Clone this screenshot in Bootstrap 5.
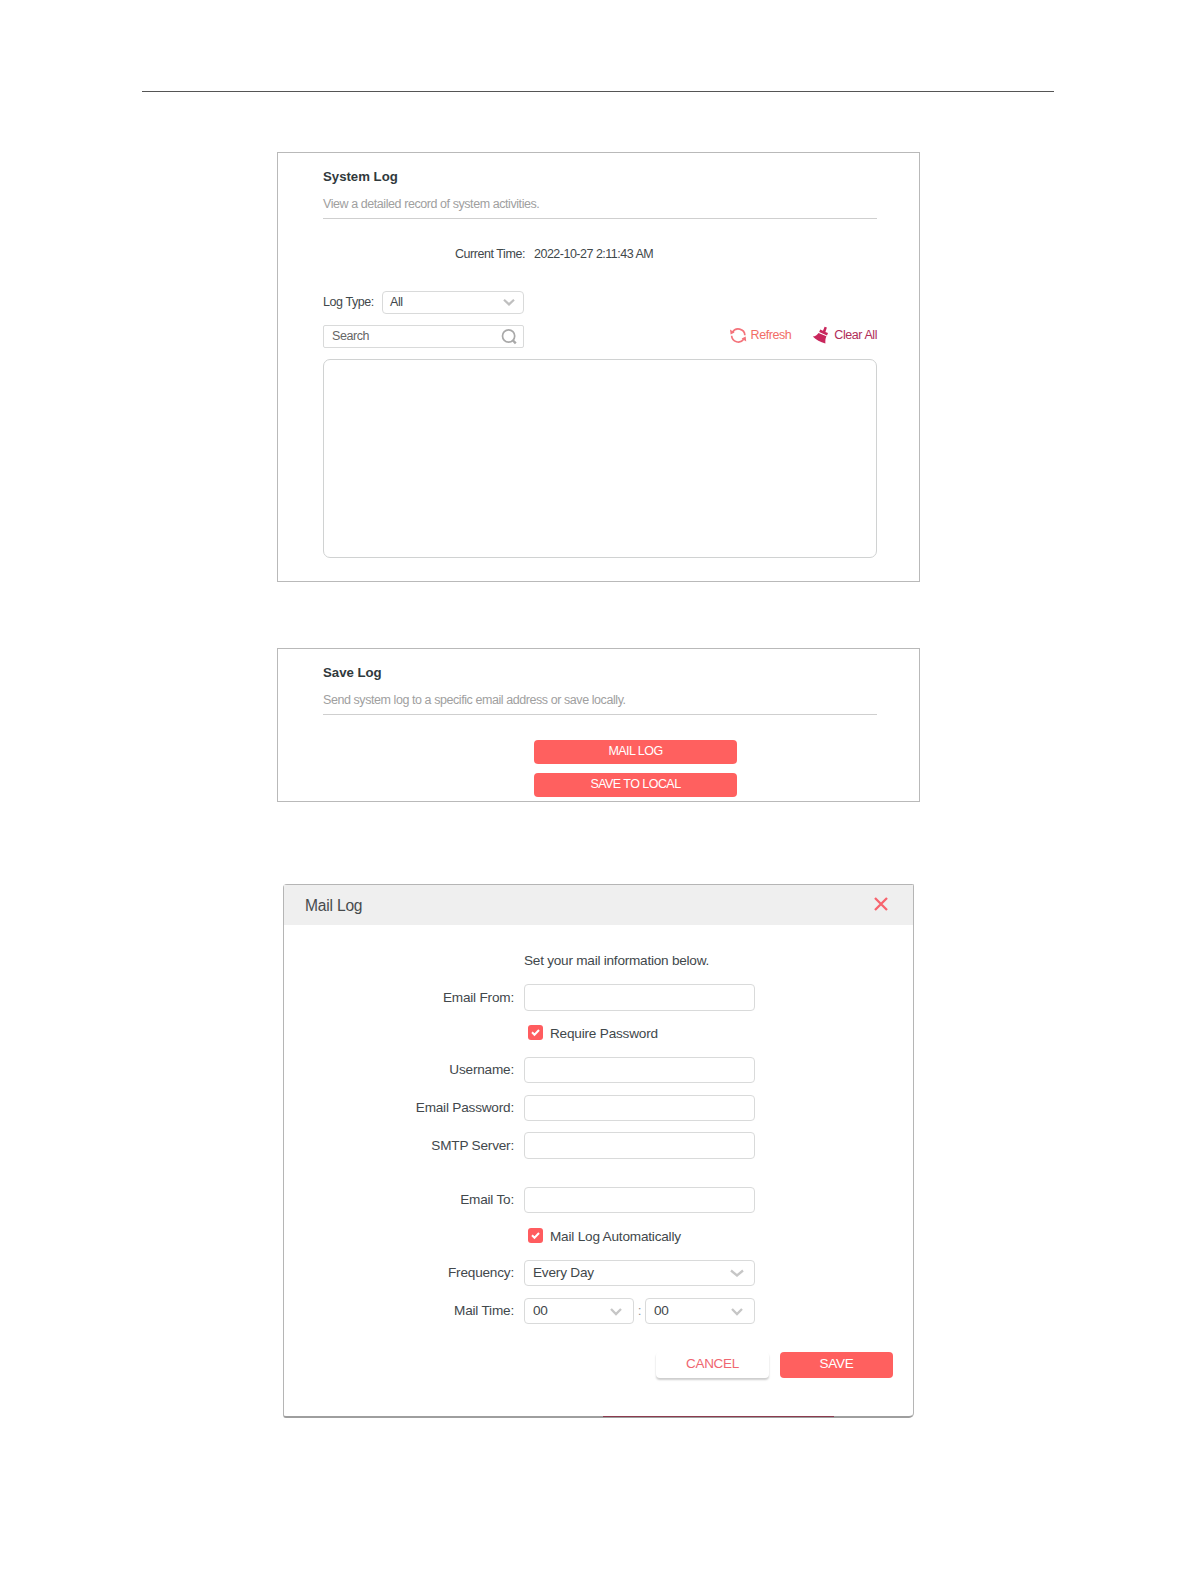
<!DOCTYPE html>
<html lang="en">
<head>
<meta charset="utf-8">
<title>System Log</title>
<link rel="stylesheet" href="https://cdn.jsdelivr.net/npm/bootstrap@5.3.0/dist/css/bootstrap.min.css">
<style>
body{font-family:"Liberation Sans",Arial,sans-serif;font-size:12.5px;letter-spacing:-.43px;line-height:16px;color:#3f484b;background:#fff}
.sheet{width:1196px;height:1582px;padding-top:91px}
.top-rule{width:912px;height:1px;margin-left:142px;background:#555}
.panel{width:643px;margin-left:277px;border:1px solid #b9b9b9;padding:0 42px 0 45px}
.panel-log{height:430px;margin-top:60px;padding-top:16px}
.panel-save{height:154px;margin-top:66px;padding-top:16px}
.panel-title{font-size:13.2px;font-weight:700;letter-spacing:0;line-height:16px;margin:0 0 11px;color:#30393c}
.panel-sub{color:#a0a0a0;border-bottom:1px solid #cfcfcf;height:23px;margin:0}
.now{margin-top:27px}
.now-label{width:202px;margin-right:9px;text-align:right}
.now-value{letter-spacing:-.5px}
.type-row{margin-top:29px;height:23px}
.type-label{width:59px;padding-bottom:2px}
.field{border:1px solid #d9dada;border-radius:4px;background:#fff}
.field.form-control{box-shadow:none;min-height:0;padding:0 9px;color:inherit;font:inherit;letter-spacing:inherit}
.field-type{width:142px;height:23px;padding:0 8px 1px 7px}
.tool-row{margin-top:11px;height:23px}
.field-search{width:201px;height:23px;padding:0 5px 1px 8px;border-radius:2px;color:#666}
.act{line-height:16px;margin-top:-3px}
.act-refresh{color:#f26d66;margin-right:21px}
.act-clear{color:#b12d59}
.log-box{margin-top:11px;height:199px;border:1px solid #d0d2d2;border-radius:7px}
.btn-coral{--bs-btn-color:#fff;--bs-btn-bg:#ff605f;--bs-btn-border-color:#ff605f;--bs-btn-hover-bg:#f45554;--bs-btn-hover-color:#fff;border:0;border-radius:4px;font-size:12.5px;line-height:16px;padding:3px 0 5px;letter-spacing:-.55px}
.save-stack{width:203px;margin:25px 0 0 211px;gap:9px}
.dialog-mail{width:631px;height:534px;margin:82px 0 0 283px;border:1px solid #b5b5b5;border-bottom:2px solid #9e9e9e;border-radius:4px 2px 5px 3px;font-size:13.6px;letter-spacing:-.2px;position:relative}
.dialog-head{height:40px;background:#efefef;padding:2px 25px 0 21px;font-size:15.6px;letter-spacing:-.2px;color:#474b4d}
.dialog-close{margin-top:-4px}
.mail-note{margin:28px 0 0 240px;letter-spacing:-.24px}
.mail-line{height:26px}
.mail-line-tall{height:27px}
.mail-label{width:230px;margin-right:10px;text-align:right;color:#42484c}
.mail-field{width:231px;height:100%;padding:0 9px 0 8px}
.time-field{width:110px}
.time-colon{width:11px;color:#999}
.check-line{margin-left:244px;height:15px}
.check-text{margin-top:2px}
.tick{width:15px;height:15px;border-radius:3px;background:#ff5c5f;margin-right:7px}
.foot{margin:28px 20px 0 0;gap:11px}
.foot .btn{width:113px;height:26px;font-size:13.5px;line-height:16px;letter-spacing:-.3px;padding:4px 0 6px;border-radius:4px}
.btn-pale{border:0;background:#fff;color:#ef6670;box-shadow:0 2px 2px rgba(0,0,0,.2)}
.under-strip{position:absolute;left:319px;bottom:-1px;width:231px;height:1px;background:#8c3a4e}
.g-first{margin-top:15px}.g10{margin-top:11px}.g11{margin-top:12px}.g-check1{margin-top:14px}.g-check2{margin-top:15px}.g-after{margin-top:17px}.g-far{margin-top:28px}
svg{display:block;flex:none}
</style>
</head>
<body>
<main class="sheet overflow-hidden">
  <div class="top-rule"></div>

  <section class="panel panel-log">
    <h2 class="panel-title">System Log</h2>
    <p class="panel-sub">View a detailed record of system activities.</p>
    <div class="now d-flex"><span class="now-label">Current Time:</span><span class="now-value">2022-10-27 2:11:43 AM</span></div>
    <div class="type-row d-flex align-items-center">
      <span class="type-label">Log Type:</span>
      <div class="field field-type d-flex align-items-center justify-content-between"><span>All</span>
        <svg width="12" height="8" viewBox="0 0 12 8"><path d="M1 1.7 6 6.4 11 1.7" fill="none" stroke="#bfbfbf" stroke-width="2.2"/></svg>
      </div>
    </div>
    <div class="tool-row d-flex align-items-center justify-content-between">
      <div class="field field-search d-flex align-items-center justify-content-between"><span>Search</span>
        <svg width="18" height="18" viewBox="0 0 18 18"><g fill="none" stroke="#a9a9a9" stroke-width="1.7"><circle cx="8.6" cy="9" r="6.1"/><path d="m12.5 13 3.3 3.3" stroke-width="2.4"/></g></svg>
      </div>
      <div class="act d-flex align-items-center">
        <div class="act-refresh d-flex align-items-center">
          <svg class="me-1" width="18" height="18" viewBox="0 0 18 18"><g fill="none" stroke="#f4737b" stroke-width="1.7"><path d="M3.4 6.4A6.7 6.7 0 0 1 15.9 9.2M2.6 9.8a6.7 6.7 0 0 0 12.1 3.4"/></g><path d="M1 3.6 1.6 8.4 5.6 6.6ZM17.2 15.4l-.5-4.8-4.1 1.9Z" fill="#f4737b"/></svg>
          <span>Refresh</span>
        </div>
        <div class="act-clear d-flex align-items-center">
          <svg width="22" height="18" viewBox="0 0 22 18"><path d="M12.6.8 14.9 1.6 13.4 5.9 16 7.1 15 9.5 7.2 6 8.2 3.6 11 4.8ZM6.6 6.9 14.4 10.3C13.4 12.5 13.2 14.7 13.4 17.4 8.5 16.2 3.8 13.8.8 10.5 3.1 10.1 5.3 8.9 6.6 6.9Z" fill="#c9265c"/></svg>
          <span>Clear All</span>
        </div>
      </div>
    </div>
    <div class="log-box"></div>
  </section>

  <section class="panel panel-save">
    <h2 class="panel-title">Save Log</h2>
    <p class="panel-sub">Send system log to a specific email address or save locally.</p>
    <div class="save-stack d-grid">
      <button class="btn btn-coral">MAIL LOG</button>
      <button class="btn btn-coral">SAVE TO LOCAL</button>
    </div>
  </section>

  <section class="dialog-mail">
    <header class="dialog-head d-flex align-items-center justify-content-between">
      <span>Mail Log</span>
      <svg class="dialog-close" width="14" height="14" viewBox="0 0 14 14"><path d="m1 1 12 12M13 1 1 13" stroke="#f7646e" stroke-width="2.3"/></svg>
    </header>
    <p class="mail-note mb-0">Set your mail information below.</p>
    <div class="mail-line mail-line-tall g-first d-flex align-items-center"><label class="mail-label" for="from">Email From:</label><input id="from" class="form-control field mail-field"></div>
    <div class="check-line g-check1 d-flex align-items-center"><span class="tick"><svg width="15" height="15" viewBox="0 0 15 15"><path d="m4 7.2 2.5 2.5L11 5" fill="none" stroke="#fff" stroke-width="2"/></svg></span><span class="check-text">Require Password</span></div>
    <div class="mail-line g-after d-flex align-items-center"><label class="mail-label" for="user">Username:</label><input id="user" class="form-control field mail-field"></div>
    <div class="mail-line g11 d-flex align-items-center"><label class="mail-label" for="pass">Email Password:</label><input id="pass" class="form-control field mail-field"></div>
    <div class="mail-line mail-line-tall g10 d-flex align-items-center"><label class="mail-label" for="smtp">SMTP Server:</label><input id="smtp" class="form-control field mail-field"></div>
    <div class="mail-line g-far d-flex align-items-center"><label class="mail-label" for="to">Email To:</label><input id="to" class="form-control field mail-field"></div>
    <div class="check-line g-check2 d-flex align-items-center"><span class="tick"><svg width="15" height="15" viewBox="0 0 15 15"><path d="m4 7.2 2.5 2.5L11 5" fill="none" stroke="#fff" stroke-width="2"/></svg></span><span class="check-text">Mail Log Automatically</span></div>
    <div class="mail-line g-after d-flex align-items-center"><span class="mail-label">Frequency:</span>
      <div class="field mail-field d-flex align-items-center justify-content-between"><span>Every Day</span><svg width="16" height="10" viewBox="0 0 16 10"><path d="M2 2.5 8 7.5 14 2.5" fill="none" stroke="#c6c6c6" stroke-width="2.3"/></svg></div>
    </div>
    <div class="mail-line g11 d-flex align-items-center"><span class="mail-label">Mail Time:</span>
      <div class="field mail-field time-field d-flex align-items-center justify-content-between"><span>00</span><svg width="16" height="10" viewBox="0 0 16 10"><path d="M3 3 8 8 13 3" fill="none" stroke="#c6c6c6" stroke-width="2.3"/></svg></div>
      <span class="time-colon text-center">:</span>
      <div class="field mail-field time-field d-flex align-items-center justify-content-between"><span>00</span><svg width="16" height="10" viewBox="0 0 16 10"><path d="M3 3 8 8 13 3" fill="none" stroke="#c6c6c6" stroke-width="2.3"/></svg></div>
    </div>
    <div class="foot d-flex justify-content-end">
      <button class="btn btn-pale">CANCEL</button>
      <button class="btn btn-coral">SAVE</button>
    </div>
    <div class="under-strip"></div>
  </section>
</main>
<script src="https://cdn.jsdelivr.net/npm/bootstrap@5.3.0/dist/js/bootstrap.bundle.min.js"></script>
</body>
</html>
